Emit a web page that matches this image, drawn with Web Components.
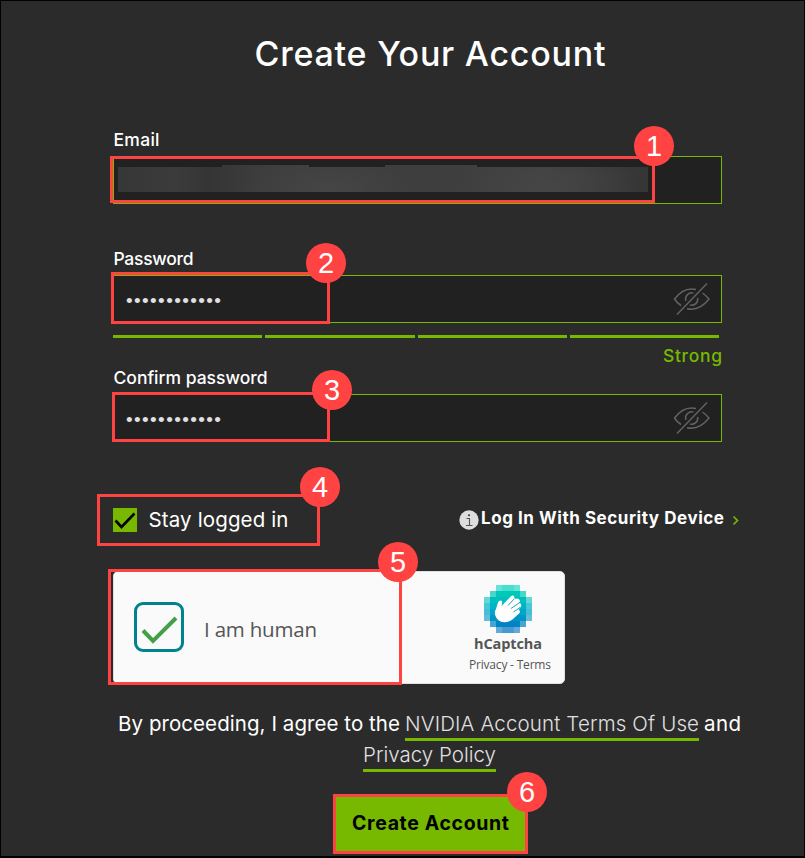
<!DOCTYPE html>
<html lang="en"><head><meta charset="utf-8"><title>Create Your Account</title>
<style>html,body{margin:0;background:#2b2b2b}</style></head><body>
<account-page></account-page>
<script>
const define=(name,html,setup)=>customElements.define(name,class extends HTMLElement{
  connectedCallback(){
    if(this.shadowRoot)return;
    this.attachShadow({mode:'open'}).innerHTML=html;
    if(setup)setup(this,this.shadowRoot);
  }
});

// Text tracked out so that it fills the width given in "w".
define('fit-text',`<style>:host{display:inline-block;white-space:nowrap}span{display:inline-block}</style><span><slot></slot></span>`,(el,r)=>{
  const s=r.querySelector('span'),w=+el.getAttribute('w');
  s.style.letterSpacing=(w-s.getBoundingClientRect().width)/(el.textContent.length-1)+'px';
  el.style.width=w+'px';
});

define('step-mark',`<style>:host{position:absolute;box-sizing:border-box;border:3px solid #ff4343;z-index:2;pointer-events:none}
b{position:absolute;width:40px;height:40px;border-radius:50%;background:#ff4343;color:#fff;font:400 29px/40px "Liberation Sans",sans-serif;text-align:center}</style><b></b>`,(el,r)=>{
  const [x,y,w,h,bx,by]=el.getAttribute('at').split(' ').map(Number);
  Object.assign(el.style,{left:x+'px',top:y+'px',width:w+'px',height:h+'px'});
  const b=r.querySelector('b');b.textContent=el.getAttribute('n');
  b.style.left=bx-x-3+'px';b.style.top=by-y-3+'px';
});

define('eye-off',`<style>:host,svg{display:block}</style><svg width="38" height="34" viewBox="0 0 38 34" fill="none" stroke="#626262" stroke-width="1.5">
<path d="M8 23.500Q4 21 1.500 17Q11 4.500 23 7.500M29.500 11Q33 13.500 36 17Q26 29.500 14 26.700M12.900 19A6.200 6.200 0 0 1 20.500 11.100M24.700 16A6.200 6.200 0 0 1 17 23M4 32.500L34 1.500"/></svg>`);

define('text-field',`<style>:host{display:block}
label{display:block;height:28px;padding-left:.5px;color:#fff;font:500 17.500px/24px Inter,sans-serif}
.box{box-sizing:border-box;width:609px;height:48px;border:1px solid #76b900;background:#212121;display:flex;align-items:center;padding:0 10px 0 12px;justify-content:space-between}
.dots{color:#e0e0e0;font:19px/20px "Liberation Sans",sans-serif;margin-top:3px}
.blur{width:530px;height:27px;margin:-3px 0 0 -8px;background:radial-gradient(ellipse 90px 40px at 210px 25px,#454545,transparent),radial-gradient(ellipse 90px 35px at 430px 20px,#454545,transparent),linear-gradient(90deg,#373737,#3b3b3b 11%,#353535 17%,#3d3d3d 28%,#3e3e3e 60%,#414141 80%,#353535);clip-path:polygon(0 2px,104px 2px,104px 0,191px 0,191px 2px,267px 2px,267px 0,359px 0,359px 2px,100% 2px,100% 100%,0 100%)}</style>
<label><slot></slot></label><div class="box"></div>`,(el,r)=>{
  r.querySelector('.box').innerHTML=el.hasAttribute('secret')?'<fit-text class="dots" w="95">••••••••••••</fit-text><eye-off></eye-off>':'<div class="blur"></div>';
});

define('strength-meter',`<style>:host{display:block;padding-top:12px;height:33px}
.bars{width:606px;display:grid;grid-template-columns:149px 150px 149px 149px;gap:3px}.bars i{height:3px;background:#76b900}
.l{width:609px;margin-top:6px;display:flex;justify-content:flex-end;color:#76b900;font:500 17.500px/24px Inter,sans-serif}</style>
<div class="bars"><i></i><i></i><i></i><i></i></div><div class="l"><fit-text w="59">Strong</fit-text></div>`);

define('hcaptcha-logo',`<style>:host,svg{display:block}</style><svg width="48" height="48" viewBox="0 0 48 48"><g shape-rendering="crispEdges"></g>
<path d="M12 24L14 17.500Q15.500 14.500 18 16Q18.500 17 17.500 21L27 11.200Q30 9.500 30.500 12.500L31.500 14Q35 12.500 36 16L35.500 18Q38 18.500 37 21.500L34.500 25Q37 25.500 35.500 28L29 34Q22 39.500 15.500 36Q10 32 11 26Z" fill="#fff"/>
<path d="M24 20.500L30.500 13.500M27 23.500L36 17.300M29.500 27L36 22.500" stroke="#0799bd" stroke-width=".9"/></svg>`,(el,r)=>{
  const c=['#00d4bf','#00c9b8','#00bfc0','#00b4c7','#00a6cb','#0095c7','#0083c5','#0074bf'],g=r.querySelector('g');
  let s='';
  for(let y=0;y<8;y++)for(let x=0;x<8;x++){
    const dx=Math.abs(x-3.5),dy=Math.abs(y-3.5),d=dx+dy;
    if(d>5)continue;
    const edge=dx===3.5||dy===3.5||d===5;
    const a=edge?(d===5&&dx!==dy?.6:.72):1;
    s+=`<rect x="${x*6}" y="${y*6}" width="6" height="6" fill="${c[y]}" opacity="${a}"/>`;
  }
  g.innerHTML=s;
});

define('human-check',`<style>:host{box-sizing:border-box;display:flex;width:452px;height:113px;background:#fafafa;border:1px solid #e0e0e0;border-radius:5px;color:#555;font-family:"Open Sans",sans-serif;align-items:center;padding:0 13px 0 20px}
.c{box-sizing:border-box;width:50px;height:50px;border:3px solid #00838f;border-radius:9px;margin:-2px 20px 0 0}
svg{display:block}.t{font-size:20.500px;line-height:28px;padding-top:2px}
.brand{margin-left:auto;display:flex;flex-direction:column;align-items:center;padding-top:2px}
hcaptcha-logo{margin-right:4px}.h{font-weight:700;font-size:14.500px;line-height:18px;margin:2px 4px 0 0}.p{font-size:12px;line-height:16px;margin-top:4px}</style>
<div class="c"><svg width="44" height="44" viewBox="0 0 44 44"><path d="M6 25.500L16 36L39 13" fill="none" stroke="#43a047" stroke-width="4"/></svg></div>
<fit-text class="t" w="113">I am human</fit-text>
<div class="brand"><hcaptcha-logo></hcaptcha-logo><fit-text class="h" w="68">hCaptcha</fit-text><fit-text class="p" w="82">Privacy - Terms</fit-text></div>`);

define('login-options',`<style>:host{display:flex;align-items:center;width:626px;height:24px;color:#fff;font-family:Inter,sans-serif}
.b{width:24px;height:24px;background:#76b900;margin-right:11.500px}svg{display:block}
.s{font-size:20.500px;line-height:24px}
.i{width:20px;height:20px;margin-left:auto;margin-right:2px}
.d{font-weight:700;font-size:17px;line-height:22px;margin-top:-4px;margin-right:8px}</style>
<div class="b"><svg width="24" height="24"><path d="M2.500 12.500L8.500 19L21.500 5.500" fill="none" stroke="#000" stroke-width="2.600"/></svg></div>
<fit-text class="s" w="140">Stay logged in</fit-text>
<svg class="i" viewBox="0 0 20 20"><circle cx="10" cy="10" r="9.700" fill="#dedede"/><path d="M7.500 8.500H10.500V15.500M7 15.500H13.500" fill="none" stroke="#555" stroke-width="1.100"/><circle cx="10" cy="5.300" r="1" fill="#333"/></svg>
<fit-text class="d" w="243">Log In With Security Device</fit-text>
<svg width="7" height="11"><path d="M1.500 1.500L5.500 5.500L1.500 9.500" fill="none" stroke="#76b900" stroke-width="1.700"/></svg>`);

define('terms-note',`<style>:host{display:flex;flex-direction:column;align-items:center;width:624px;color:#fff;font:400 20.500px/30px Inter,sans-serif}
.row{display:flex;height:31px}a{color:#e0e0e0;font-weight:300;box-sizing:border-box;height:32px;border-bottom:3px solid #76b900}</style>
<div class="row"><fit-text w="282">By proceeding, I agree to the</fit-text><a style="margin:0 5px 0 5px"><fit-text w="294">NVIDIA Account Terms Of Use</fit-text></a><fit-text w="37">and</fit-text></div>
<div class="row"><a><fit-text w="133">Privacy Policy</fit-text></a></div>`);

define('submit-button',`<style>:host{display:flex;width:189px;height:55px;background:#76b900;color:#000;font:700 19.500px/54px Inter,sans-serif;justify-content:center}</style><fit-text w="157">Create Account</fit-text>`);

define('account-page',`<style>:host{display:block;box-sizing:border-box;position:relative;width:805px;height:858px;overflow:hidden;border:1px solid #000;border-bottom-width:2px;background:#2b2b2b;padding:0 0 0 112px}
.frame{position:absolute;left:-1px;top:-1px}
h1{box-sizing:border-box;margin:0;padding-top:32px;height:127px;width:634px;text-align:center;color:#fff;font:500 34px/42px Inter,sans-serif}
h1 fit-text{vertical-align:top}
.gap{margin-top:43px}.terms{margin:25px 0 0 4.500px}.go{margin:25px 0 0 223px}</style>
<h1><fit-text w="351">Create Your Account</fit-text></h1>
<text-field><fit-text w="46">Email</fit-text></text-field>
<text-field class="gap" secret><fit-text w="80">Password</fit-text></text-field>
<strength-meter></strength-meter>
<text-field style="margin-top:-2px" secret><fit-text w="154">Confirm password</fit-text></text-field>
<login-options style="margin-top:66px"></login-options>
<human-check style="margin-top:39px"></human-check>
<terms-note class="terms"></terms-note>
<submit-button class="go"></submit-button>
<div class="frame">
<step-mark n="1" at="110 156 545 47 634 126"></step-mark>
<step-mark n="2" at="111 272 219 52 306 243"></step-mark>
<step-mark n="3" at="112 392 218 50 312 370"></step-mark>
<step-mark n="4" at="97 494 223 52 300 467"></step-mark>
<step-mark n="5" at="108 569 294 116 378 542"></step-mark>
<step-mark n="6" at="333 794 195 60 507 772"></step-mark></div>`);
</script></body></html>
